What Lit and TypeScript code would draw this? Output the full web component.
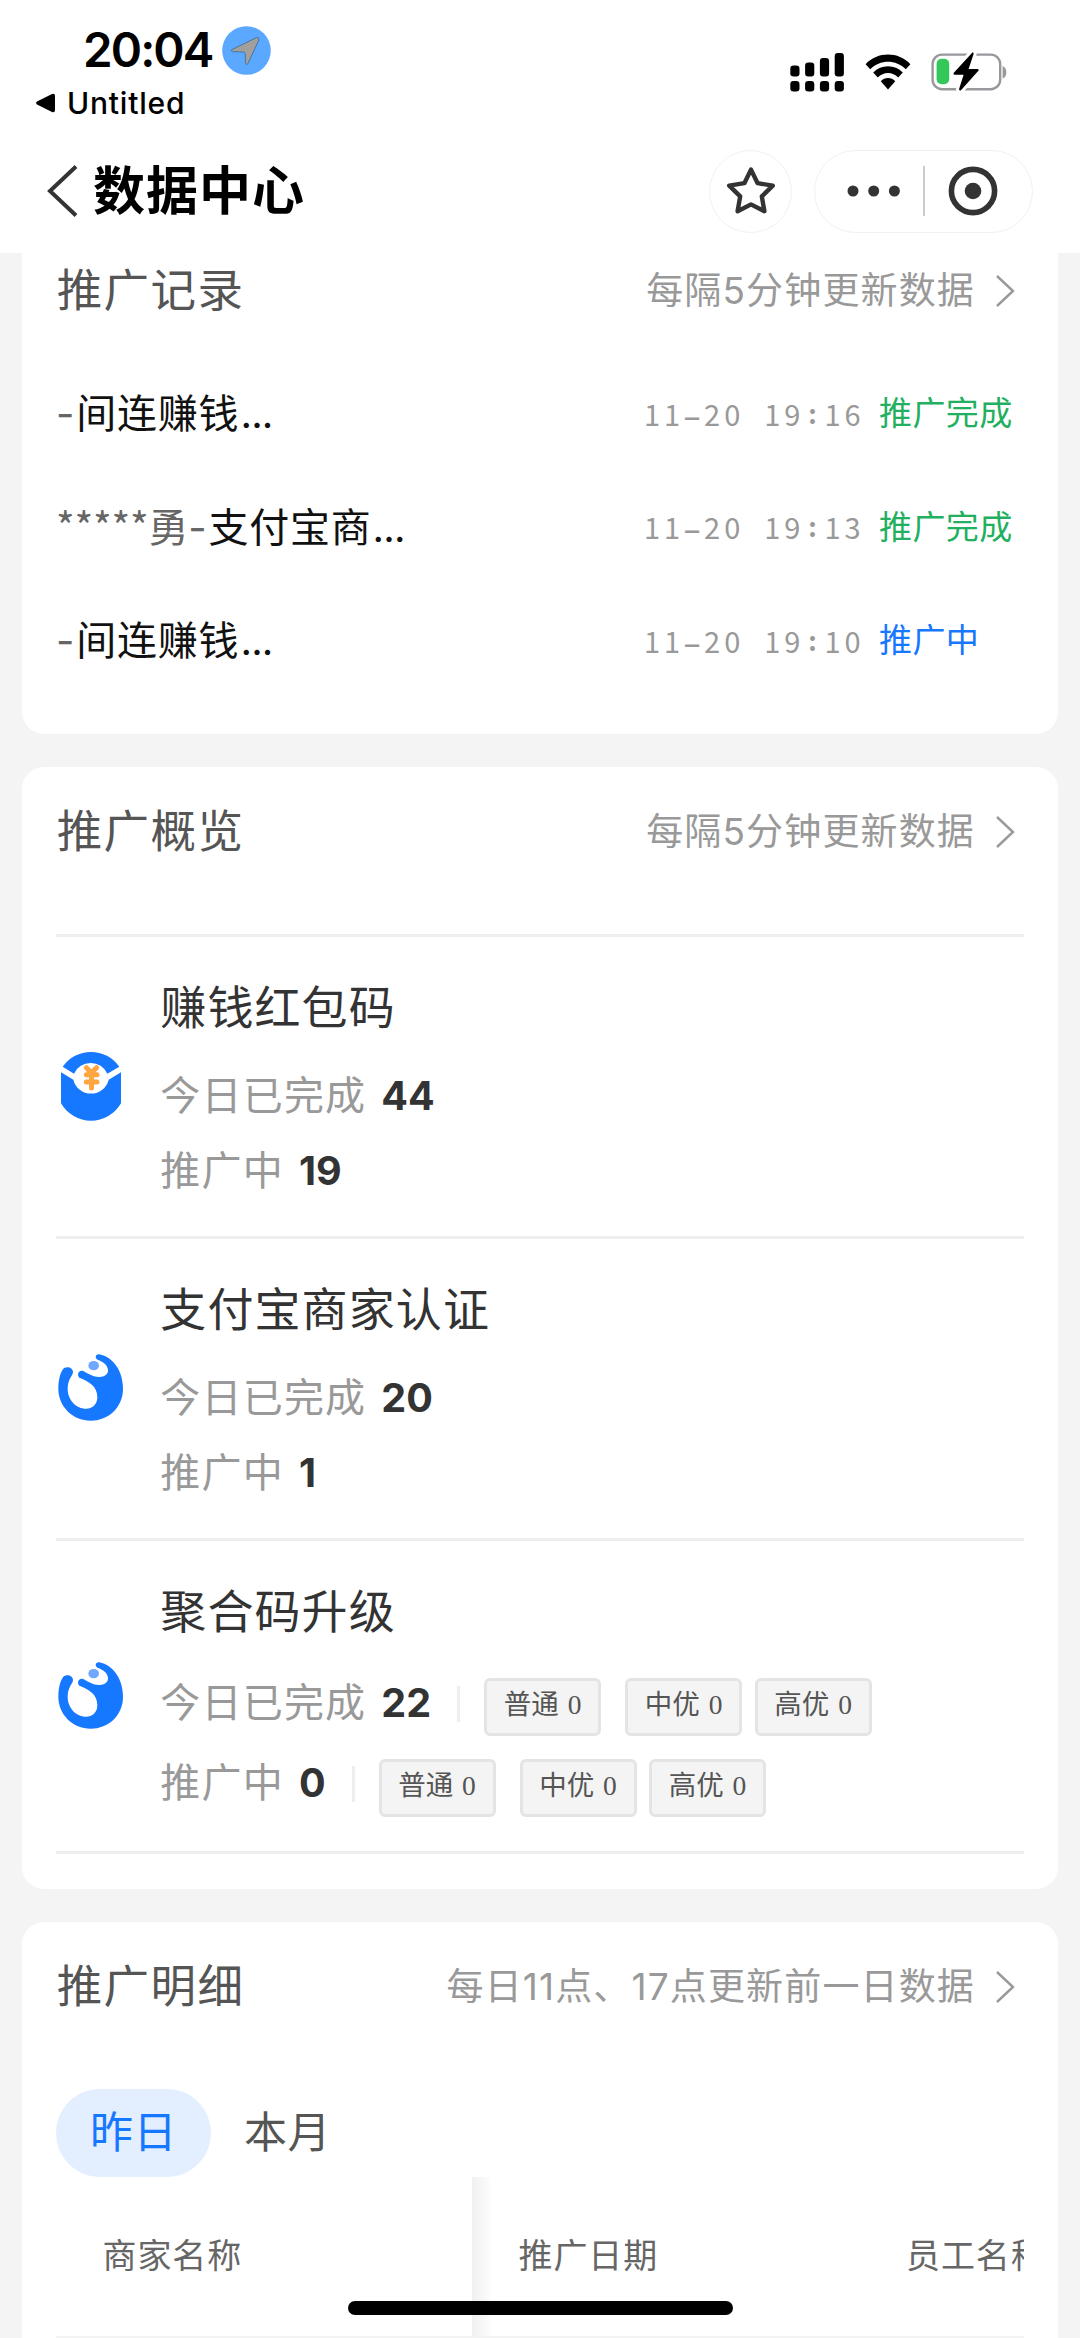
import { LitElement, html, css, svg } from "lit";
import { customElement, property } from "lit/decorators.js";

interface PromoRecord {
  owner: string;
  product: string;
  time: string;
  status: string;
  done: boolean;
}

interface Tier {
  label: string;
  count: number;
}

interface Metric {
  label: string;
  value: number;
  tiers?: Tier[];
}

interface Product {
  name: string;
  icon: "packet" | "swirl";
  metrics: Metric[];
}

const tiers: Tier[] = [
  { label: "普通", count: 0 },
  { label: "中优", count: 0 },
  { label: "高优", count: 0 },
];

const records: PromoRecord[] = [
  { owner: "", product: "间连赚钱", time: "11-20 19:16", status: "推广完成", done: true },
  { owner: "*****勇", product: "支付宝商", time: "11-20 19:13", status: "推广完成", done: true },
  { owner: "", product: "间连赚钱", time: "11-20 19:10", status: "推广中", done: false },
];

const products: Product[] = [
  {
    name: "赚钱红包码",
    icon: "packet",
    metrics: [
      { label: "今日已完成", value: 44 },
      { label: "推广中", value: 19 },
    ],
  },
  {
    name: "支付宝商家认证",
    icon: "swirl",
    metrics: [
      { label: "今日已完成", value: 20 },
      { label: "推广中", value: 1 },
    ],
  },
  {
    name: "聚合码升级",
    icon: "swirl",
    metrics: [
      { label: "今日已完成", value: 22, tiers },
      { label: "推广中", value: 0, tiers },
    ],
  },
];

const fontStack = css`Inter, "Noto Sans CJK SC", sans-serif`;

@customElement("status-bar")
export class StatusBar extends LitElement {
  static styles = css`
    :host {
      display: flex;
      justify-content: space-between;
      height: 130px;
      font-family: ${fontStack};
      color: #000;
    }
    .left {
      display: flex;
      flex-direction: column;
      padding: 24px 0 0 36px;
    }
    .clock {
      display: flex;
      align-items: center;
      gap: 10px;
      height: 52px;
      padding-left: 47px;
    }
    .time {
      font-size: 47.5px;
      font-weight: 600;
      line-height: 52px;
      letter-spacing: -1.9px;
      width: 129px;
      white-space: nowrap;
    }
    .back {
      display: flex;
      align-items: center;
      gap: 11px;
      height: 54px;
    }
    .app {
      font-size: 30px;
      font-weight: 500;
      line-height: 54px;
      letter-spacing: 0.8px;
    }
    .right {
      display: flex;
      align-items: center;
      gap: 20px;
      height: 44px;
      padding: 50px 72px 0 0;
    }
    svg {
      display: block;
      flex: none;
    }
  `;

  render() {
    return html`
      <div class="left">
        <div class="clock">
          <span class="time">20:04</span>
          <svg width="49" height="49" viewBox="0 0 49 49">
            <circle cx="24.5" cy="24.5" r="24.3" fill="#5aa8ff" />
            <path
              d="M9.5 23.8 L34.5 11.6 Q37.5 10.8 36.9 14 L25.8 37.8 Q24.3 40 23.6 37 L23.2 27.6 Q23 26.2 21.5 26 L10.5 25.6 Q8.4 24.8 9.5 23.8Z"
              fill="#a29f9d"
              stroke="#49759f"
              stroke-width="1"
            />
          </svg>
        </div>
        <div class="back">
          <svg width="20" height="20" viewBox="0 0 20 20">
            <path d="M1 8.6 L16 0.9 Q19 0 19 3 V17 Q19 20 16 19.1 L1 11.4 Q-0.8 10 1 8.6Z" />
          </svg>
          <span class="app">Untitled</span>
        </div>
      </div>
      <div class="right">
        <svg width="55" height="40" viewBox="0 0 55 40">
          ${[0, 1, 2, 3].map((i) => {
            const top = [13.5, 10.5, 6, 1][i];
            const x = 0.3 + i * 14.8;
            return svg`
              <rect x=${x} y=${top} width="9.2" height=${24.5 - top} rx="3.2" />
              <rect x=${x} y="29" width="9.2" height="10.5" rx="3.2" />`;
          })}
        </svg>
        <svg width="46" height="36" viewBox="0 0 46 36">
          <path d="M0.6 10.2 C12.6 -2.6 33.4 -2.6 45.4 10.2 L40.8 15.2 C31 5.2 15 5.2 5.2 15.2Z" />
          <path d="M8.2 18.6 C16 10.2 30 10.2 37.8 18.6 L33.2 23.6 C27.6 17.6 18.4 17.6 12.8 23.6Z" />
          <path d="M15.8 27.2 C19.6 23 26.4 23 30.2 27.2 L23 35.4Z" />
        </svg>
        <svg width="77" height="40" viewBox="0 0 77 40">
          <rect x="1.6" y="2.6" width="67.6" height="34.6" rx="9.5" fill="none" stroke="#98989d" stroke-width="2.4" />
          <path d="M71.6 14 C76.6 15.6 76.6 25 71.6 26.6Z" fill="#98989d" />
          <rect x="5.6" y="6.8" width="12.6" height="25.4" rx="5" fill="#34c759" />
          <path
            d="M41.4 0.4 L22.6 21 Q21.8 22.6 23.6 22.7 H32.6 L28 37.2 Q28.6 39.4 30 38.2 L47.6 18.6 Q48.4 17 46.4 16.9 H37.6 L42.6 2 Q42.6 0 41.4 0.4Z"
            stroke="#fff"
            stroke-width="6"
            paint-order="stroke"
          />
        </svg>
      </div>
    `;
  }
}

@customElement("nav-bar")
export class NavBar extends LitElement {
  static styles = css`
    :host {
      display: flex;
      align-items: center;
      box-sizing: border-box;
      height: 123px;
      padding: 0 47px 1px;
      font-family: ${fontStack};
    }
    .title {
      flex: 1;
      margin-left: 15px;
      padding-top: 1px;
      font-size: 52px;
      line-height: 70px;
      font-weight: 700;
      letter-spacing: 1px;
      color: #000;
    }
    .favorite,
    .capsule {
      display: flex;
      align-items: center;
      box-sizing: border-box;
      height: 83px;
      border: 1.5px solid #f1f1f1;
      border-radius: 42px;
    }
    .favorite {
      justify-content: center;
      width: 83px;
      margin-right: 22px;
    }
    .capsule {
      width: 219px;
      padding-left: 32px;
    }
    .rule {
      width: 1.5px;
      height: 50px;
      margin: 0 23px 0 22px;
      background: #ccc;
    }
    svg {
      display: block;
      flex: none;
    }
  `;

  render() {
    return html`
      <svg width="31" height="52" viewBox="0 0 31 52">
        <path d="M29 1.5 L3 26 L29 50.5" fill="none" stroke="#333" stroke-width="4" />
      </svg>
      <span class="title">数据中心</span>
      <span class="favorite">
        <svg width="50" height="50" viewBox="0 0 50 50">
          <path
            d="M25 3.6 L31.6 17.2 L46.8 19.6 L35.8 30.4 L38.4 45.2 L25 38.4 L11.6 45.2 L14.2 30.4 L3.2 19.6 L18.4 17.2Z"
            fill="none"
            stroke="#333"
            stroke-width="4.4"
            stroke-linejoin="round"
          />
        </svg>
      </span>
      <span class="capsule">
        <svg width="54" height="12" viewBox="0 0 54 12" fill="#333">
          <circle cx="6" cy="6" r="5.5" />
          <circle cx="26.7" cy="6" r="5.5" />
          <circle cx="47.4" cy="6" r="5.5" />
        </svg>
        <span class="rule"></span>
        <svg width="50" height="50" viewBox="0 0 50 50">
          <circle cx="25" cy="25" r="21.6" fill="none" stroke="#333" stroke-width="5.6" />
          <circle cx="25" cy="25" r="8.3" fill="#333" />
        </svg>
      </span>
    `;
  }
}

@customElement("section-head")
export class SectionHead extends LitElement {
  @property() heading = "";
  @property() note = "";

  static styles = css`
    :host {
      display: flex;
      align-items: center;
      flex: none;
      height: 130px;
      font-family: ${fontStack};
      white-space: nowrap;
    }
    .heading {
      flex: 1;
      padding-left: 0.7px;
      font-size: 45.5px;
      line-height: 60px;
      letter-spacing: 1.4px;
      color: #555;
    }
    .note {
      font-size: 37px;
      line-height: 60px;
      letter-spacing: 1.15px;
      color: #999;
    }
    .arrow {
      display: block;
      flex: none;
      margin: 1px 9px 0 20px;
    }
  `;

  render() {
    return html`
      <span class="heading">${this.heading}</span>
      <span class="note">${this.note}</span>
      <svg class="arrow" width="20" height="32" viewBox="0 0 20 32">
        <path d="M2 1 L18 16 L2 31" fill="none" stroke="#999" stroke-width="2.4" />
      </svg>
    `;
  }
}

@customElement("record-row")
export class RecordRow extends LitElement {
  @property({ attribute: false }) record!: PromoRecord;

  static styles = css`
    :host {
      display: grid;
      grid-template-columns: 586px 237px 1fr;
      align-items: center;
      height: 113.4px;
      font-family: ${fontStack};
      white-space: nowrap;
    }
    .name {
      padding-bottom: 1.5px;
      font-size: 40px;
      line-height: 60px;
      letter-spacing: 0.8px;
      color: #111;
    }
    .owner {
      font-family: "Noto Sans CJK SC", sans-serif;
      letter-spacing: -0.2px;
      color: #666;
    }
    .joiner {
      letter-spacing: 1.8px;
      color: #666;
    }
    .more {
      padding-left: 1px;
      letter-spacing: -0.8px;
    }
    .time {
      display: flex;
      padding-bottom: 1px;
      font-family: "Noto Sans CJK SC", sans-serif;
      font-size: 29px;
      line-height: 40px;
      color: #999;
    }
    .cell {
      width: 20.06px;
      text-align: center;
      white-space: pre;
    }
    .dash {
      transform: scale(1.9, 1.25);
    }
    .colon {
      font-size: 26px;
      font-weight: 700;
    }
    .status {
      font-size: 33px;
      line-height: 48px;
      letter-spacing: 0.4px;
      color: #1677ff;
    }
    .status.done {
      color: #22b060;
    }
  `;

  private cellClass(char: string) {
    if (char === "-") return "cell dash";
    if (char === ":") return "cell colon";
    return "cell";
  }

  render() {
    const { owner, product, time, status, done } = this.record;
    return html`
      <span class="name"
        ><span class="owner">${owner}</span><span class="joiner">-</span>${product}<span class="more">...</span></span
      >
      <span class="time">${[...time].map((c) => html`<span class=${this.cellClass(c)}>${c}</span>`)}</span>
      <span class=${done ? "status done" : "status"}>${status}</span>
    `;
  }
}

@customElement("product-item")
export class ProductItem extends LitElement {
  @property({ attribute: false }) product!: Product;

  static styles = css`
    :host {
      display: flex;
      align-items: center;
      border-bottom: 3px solid #eee;
      font-family: ${fontStack};
      white-space: nowrap;
    }
    .icon {
      display: block;
      flex: none;
    }
    .icon.packet {
      margin-bottom: 3px;
    }
    .body {
      display: flex;
      flex-direction: column;
      padding: 37.5px 0 27.5px 26.3px;
    }
    .name {
      font-size: 46px;
      line-height: 66px;
      letter-spacing: 1.1px;
      margin-bottom: 18px;
      color: #333;
    }
    .metric {
      display: flex;
      align-items: center;
      height: 75px;
    }
    .metric.tiered {
      height: 80.5px;
    }
    .label {
      font-size: 40px;
      line-height: 60px;
      letter-spacing: 1.2px;
      color: #999;
    }
    .value {
      margin-left: 15px;
      font-size: 39.5px;
      line-height: 60px;
      font-weight: 700;
      color: #333;
    }
    .rule {
      width: 3px;
      height: 36px;
      margin: 2px 24px 0 26px;
      background: #eee;
    }
    .tag {
      box-sizing: border-box;
      width: 117px;
      height: 58px;
      margin: 9px 12.5px 0 0;
      border: 3px solid #e4e4e4;
      border-radius: 6px;
      background: #f4f4f4;
      text-align: center;
      font-family: "Liberation Serif", "Noto Sans CJK SC", serif;
      font-size: 27.5px;
      line-height: 48px;
      word-spacing: 2px;
      color: #555;
    }
    .tag:first-of-type {
      margin-right: 24px;
    }
    .tags {
      display: flex;
    }
  `;

  private packetIcon() {
    return svg`
      <path d="M38 80 A104 104 0 0 1 208 80 L172 101 A55 55 0 0 0 72 101Z" fill="#1677ff" />
      <path d="M33 97 L70 119 A54.500 54.500 0 0 0 176 119 L213 97 V190 A104 104 0 0 1 33 190Z" fill="#1677ff" />
      <path d="M109 83 L124 98 L140 83 M109 104 H141 M109 126 H141 M124.500 97 V144"
        fill="none" stroke="#ffa640" stroke-width="15" stroke-linecap="round" />`;
  }

  private swirlIcon() {
    return svg`
      <path fill="#1677ff" d="M148 34 C190 42 219 85 219 137 C219 192 176 233 122 233 C68 233 25 190 25 137
        C25 112 30 92 38 80 C46 68 69 72 69 88 C69 97 53 108 53 137 C53 172 80 197 108 197
        C130 197 142 182 142 162 C142 130 115 115 92 106 C80 101 82 82 97 83 C108 86 125 102 148 102
        C165 102 174 94 174 82 C174 65 158 56 143 50 C133 45 137 33 148 34Z" />
      <ellipse cx="131" cy="68" rx="16" ry="14" fill="#70a8ff" />`;
  }

  private metricRow(metric: Metric) {
    return html`
      <div class=${metric.tiers ? "metric tiered" : "metric"}>
        <span class="label">${metric.label}</span>
        <span class="value">${metric.value}</span>
        ${metric.tiers
          ? html`<i class="rule"></i>
              <div class="tags">
                ${metric.tiers.map((t) => html`<span class="tag">${t.label} ${t.count}</span>`)}
              </div>`
          : null}
      </div>
    `;
  }

  render() {
    const { name, icon, metrics } = this.product;
    return html`
      <svg class="icon ${icon}" width="78" height="90" viewBox="18 0 234 270">
        ${icon === "packet" ? this.packetIcon() : this.swirlIcon()}
      </svg>
      <div class="body">
        <span class="name">${name}</span>
        ${metrics.map((m) => this.metricRow(m))}
      </div>
    `;
  }
}

@customElement("app-root")
export class AppRoot extends LitElement {
  static styles = css`
    :host {
      display: flex;
      flex-direction: column;
      position: relative;
      box-sizing: border-box;
      width: 1080px;
      height: 2338px;
      overflow: hidden;
      background: #f4f4f4;
      font-family: ${fontStack};
    }
    .header {
      flex: none;
      background: #fff;
    }
    .content {
      display: flex;
      flex-direction: column;
      gap: 33px;
      padding: 0 22px;
    }
    .card {
      display: flex;
      flex-direction: column;
      flex: none;
      padding: 0 34px;
      border-radius: 22px;
      background: #fff;
    }
    .card.scrolled {
      border-radius: 0 0 22px 22px;
      padding-bottom: 37px;
    }
    .card.scrolled section-head {
      height: 75px;
      margin-bottom: 28.8px;
    }
    .card.overview {
      padding-bottom: 35px;
    }
    .card.detail {
      border-radius: 22px 22px 0 0;
      height: 420px;
    }
    .products {
      margin-top: 37px;
      border-top: 3px solid #eee;
    }
    .tabs {
      display: flex;
      gap: 33px;
      margin-top: 37px;
    }
    .tab {
      font-size: 43px;
      line-height: 87px;
      letter-spacing: 0.5px;
      height: 88px;
      color: #555;
    }
    .tab.active {
      width: 155px;
      border-radius: 44px;
      text-align: center;
      background: #e3eeff;
      color: #1677ff;
    }
    .table {
      display: grid;
      grid-template-columns: 416px 387.5px 1fr;
      height: 159px;
      overflow: hidden;
      border-bottom: 3px solid #f3f3f3;
      font-size: 34px;
      line-height: 157px;
      letter-spacing: 0.9px;
      white-space: nowrap;
      color: #666;
    }
    .col {
      padding-left: 46.5px;
      overflow: hidden;
    }
    .col.beside {
      background: linear-gradient(to right, #f2f0f3, #f8f7f9 12px, #fff 20px);
    }
    .home {
      position: absolute;
      left: 348px;
      bottom: 23px;
      width: 385px;
      height: 14px;
      border-radius: 7px;
      background: #000;
    }
  `;

  render() {
    return html`
      <div class="header">
        <status-bar></status-bar>
        <nav-bar></nav-bar>
      </div>
      <div class="content">
        <div class="card scrolled">
          <section-head heading="推广记录" note="每隔5分钟更新数据"></section-head>
          ${records.map((r) => html`<record-row .record=${r}></record-row>`)}
        </div>
        <div class="card overview">
          <section-head heading="推广概览" note="每隔5分钟更新数据"></section-head>
          <div class="products">
            ${products.map((p) => html`<product-item .product=${p}></product-item>`)}
          </div>
        </div>
        <div class="card detail">
          <section-head heading="推广明细" note="每日11点、17点更新前一日数据"></section-head>
          <div class="tabs">
            <span class="tab active">昨日</span>
            <span class="tab">本月</span>
          </div>
          <div class="table">
            <span class="col">商家名称</span>
            <span class="col beside">推广日期</span>
            <span class="col">员工名称</span>
          </div>
        </div>
      </div>
      <div class="home"></div>
    `;
  }
}
